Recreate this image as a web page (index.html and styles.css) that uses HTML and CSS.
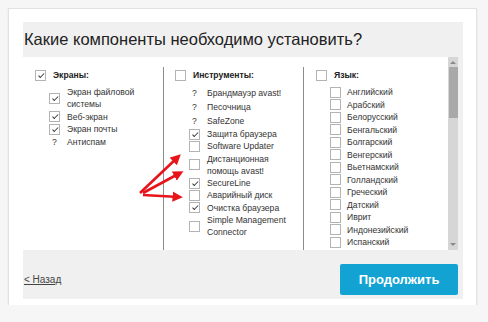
FILE: index.html
```html
<!DOCTYPE html>
<html lang="ru">
<head>
  <meta charset="UTF-8">
  <title>Установка компонентов</title>
  <link rel="stylesheet" href="styles.css">
</head>
<body>

<div class="card">
  <div class="panel">
    <h1 class="title">Какие компоненты необходимо установить?</h1>

    <!-- Список компонентов -->
    <div class="box">
      <div class="col">
        <div class="head"><span class="cb on"></span>Экраны:</div>
        <ul class="items">
          <li class="item"><span class="cb on"></span><span>Экран файловой<br>системы</span></li>
          <li class="item"><span class="cb on"></span>Веб-экран</li>
          <li class="item"><span class="cb on"></span>Экран почты</li>
          <li class="item q"><span class="qm">?</span>Антиспам</li>
        </ul>
      </div>

      <div class="col">
        <div class="head"><span class="cb"></span>Инструменты:</div>
        <ul class="items">
          <li class="item q"><span class="qm">?</span>Брандмауэр avast!</li>
          <li class="item q"><span class="qm">?</span>Песочница</li>
          <li class="item q"><span class="qm">?</span>SafeZone</li>
          <li class="item"><span class="cb on"></span>Защита браузера</li>
          <li class="item"><span class="cb"></span>Software Updater</li>
          <li class="item"><span class="cb"></span><span>Дистанционная<br>помощь avast!</span></li>
          <li class="item"><span class="cb on"></span>SecureLine</li>
          <li class="item"><span class="cb"></span>Аварийный диск</li>
          <li class="item"><span class="cb on"></span>Очистка браузера</li>
          <li class="item"><span class="cb"></span><span>Simple Management<br>Connector</span></li>
        </ul>
      </div>

      <div class="col lang">
        <div class="head"><span class="cb"></span>Язык:</div>
        <ul class="items">
          <li class="item"><span class="cb"></span>Английский</li>
          <li class="item"><span class="cb"></span>Арабский</li>
          <li class="item"><span class="cb"></span>Белорусский</li>
          <li class="item"><span class="cb"></span>Бенгальский</li>
          <li class="item"><span class="cb"></span>Болгарский</li>
          <li class="item"><span class="cb"></span>Венгерский</li>
          <li class="item"><span class="cb"></span>Вьетнамский</li>
          <li class="item"><span class="cb"></span>Голландский</li>
          <li class="item"><span class="cb"></span>Греческий</li>
          <li class="item"><span class="cb"></span>Датский</li>
          <li class="item"><span class="cb"></span>Иврит</li>
          <li class="item"><span class="cb"></span>Индонезийский</li>
          <li class="item"><span class="cb"></span>Испанский</li>
        </ul>
      </div>

      <div class="scroll">
        <span class="arrow up"></span>
        <span class="thumb"></span>
        <span class="arrow down"></span>
      </div>
    </div>

    <!-- Кнопки -->
    <div class="footer">
      <a href="#" class="back">&lt; Назад</a>
      <button type="button" class="next">Продолжить</button>
    </div>
  </div>
</div>

<!-- стрелки поверх списка -->
<svg class="marks" width="488" height="322" viewBox="0 0 488 322">
  <defs>
    <marker id="head" markerWidth="4" markerHeight="4" refX="2.5" refY="2" orient="auto" markerUnits="strokeWidth">
      <path d="M0,0 L4,2 L0,4 z" fill="#e8141b"/>
    </marker>
  </defs>
  <g stroke="#e8141b" stroke-width="2.6" fill="none" marker-end="url(#head)">
    <line x1="140" y1="193" x2="178" y2="157"/>
    <line x1="143" y1="193" x2="180" y2="173"/>
    <line x1="143" y1="195" x2="179" y2="197"/>
  </g>
</svg>

</body>
</html>
```

FILE: styles.css
```css
body {
  margin: 0;
  background-color: #f6f6f6;
  font-family: "Liberation Sans", Arial, sans-serif;
  position: relative;
}

.card {
  position: relative;
  top: 8px;
  left: 8px;
  width: 469px;
  height: 305px;
  box-sizing: border-box;
  background-color: #fff;
  border: 1px solid #e2e2e2;
  box-shadow: 0 1px 2px rgba(0, 0, 0, 0.08);
  padding: 13px 0 0 14px;
}

.panel {
  width: 440px;
  height: 277px;
  box-sizing: border-box;
  padding-right: 5px;
  background-color: #f0f0f0;
  display: flex;
  flex-direction: column;
}

.title {
  margin: 0;
  height: 35px;
  padding-left: 1px;
  font-size: 16.5px;
  font-weight: normal;
  line-height: 35px;
  color: #222;
}

.box {
  height: 193px;
  background-color: #fff;
  display: flex;
  overflow: hidden;
}

.col {
  width: 140px;
  margin-top: 10px;
  padding: 2px 0 0 12px;
  box-sizing: border-box;
  font-size: 8.6px;
  color: #333;
}

.col + .col {
  border-left: 1px solid #8c8c8c;
  padding-left: 11px;
}

.col.lang {
  flex: 1;
  padding-left: 12px;
}

.head {
  display: flex;
  align-items: center;
  gap: 7px;
  height: 12px;
  font-weight: bold;
  color: #222;
}

.items {
  list-style: none;
  margin: 5px 0 0 14px;
  padding: 0;
}

.item {
  display: flex;
  align-items: center;
  gap: 7px;
  min-height: 12.3px;
  line-height: 12.3px;
}

.item.q {
  min-height: 14px;
}

.lang .item {
  min-height: 12.5px;
  line-height: 12.5px;
  gap: 6px;
}

.qm {
  width: 11px;
  text-align: center;
  flex: none;
}

.cb {
  width: 11px;
  height: 11px;
  box-sizing: border-box;
  border: 1px solid #b3b3b3;
  background-color: #fff;
  flex: none;
  position: relative;
}

.cb.on::after {
  content: "";
  position: absolute;
  left: 3.5px;
  top: 1px;
  width: 2px;
  height: 4.5px;
  border: solid #333;
  border-width: 0 1.6px 1.6px 0;
  transform: rotate(45deg);
}

.scroll {
  width: 10px;
  flex: none;
  background-color: #d6d6d6;
  display: flex;
  flex-direction: column;
  align-items: center;
}

.thumb {
  width: 9px;
  height: 51px;
  background-color: #a9a9a9;
}

.arrow {
  width: 0;
  height: 0;
  border-left: 3px solid transparent;
  border-right: 3px solid transparent;
  margin: 4px 0 3px;
}

.arrow.up {
  border-bottom: 3px solid #8a8a8a;
}

.arrow.down {
  margin-top: auto;
  margin-bottom: 4px;
  border-top: 3px solid #8a8a8a;
}

.footer {
  flex: 1;
  display: flex;
  align-items: center;
  justify-content: space-between;
  padding: 14px 0 4px 1px;
}

.back {
  font-size: 10px;
  color: #444;
  text-decoration: underline;
}

.next {
  width: 118px;
  height: 31px;
  border: none;
  border-radius: 2px;
  background-color: #13a3d3;
  color: #fff;
  font-family: "Liberation Sans", Arial, sans-serif;
  font-size: 13px;
  font-weight: bold;
  cursor: pointer;
}

.marks {
  position: absolute;
  left: 0;
  top: 0;
  pointer-events: none;
}
```
